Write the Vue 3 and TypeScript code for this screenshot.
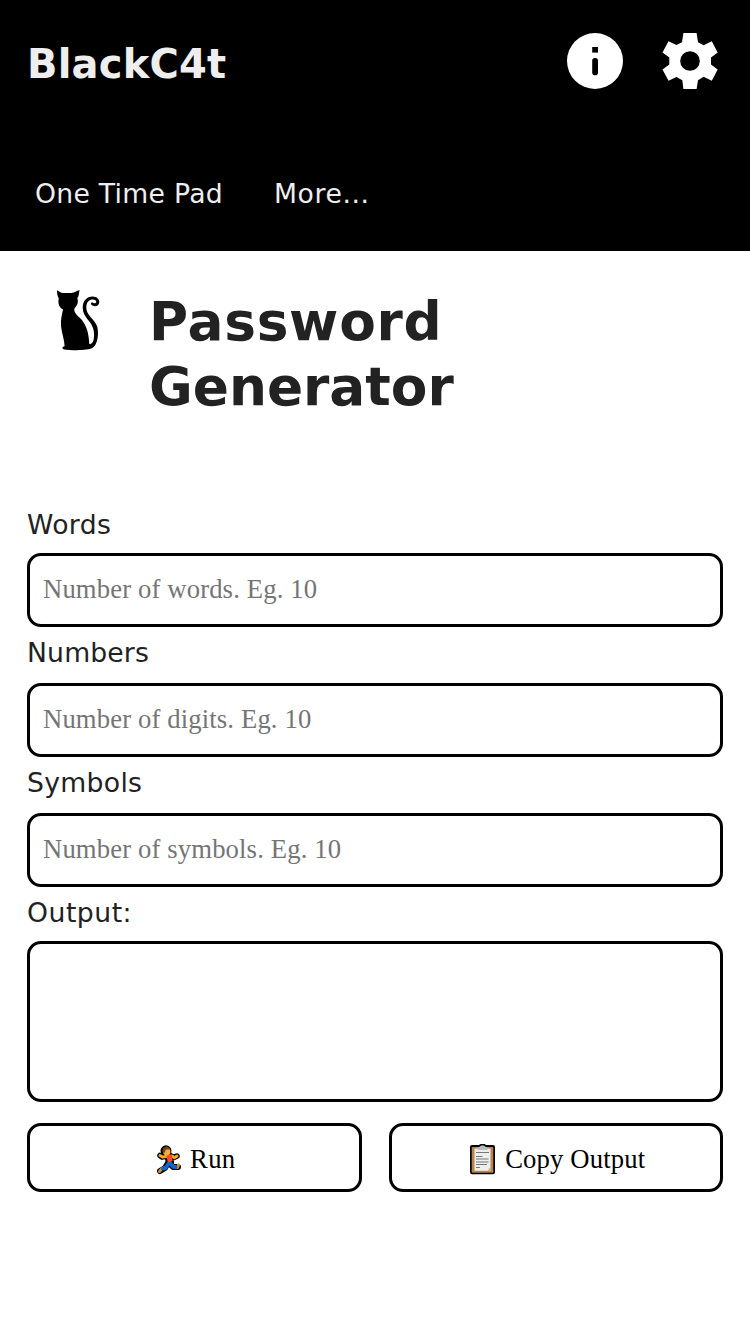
<script setup lang="ts">
interface Field {
  id: string
  label: string
  hint: string
}

const fields: Field[] = [
  { id: 'words', label: 'Words', hint: 'Number of words. Eg. 10' },
  { id: 'numbers', label: 'Numbers', hint: 'Number of digits. Eg. 10' },
  { id: 'symbols', label: 'Symbols', hint: 'Number of symbols. Eg. 10' },
]
</script>

<template>
  <div class="page">
    <header class="header">
      <div class="bar">
        <span class="brand">BlackC4t</span>
        <div class="actions">
          <svg class="icon" viewBox="0 0 56 56" aria-label="Info">
            <circle cx="28" cy="28" r="28" fill="#fff" />
            <rect x="25.2" y="14" width="5.800" height="5.600" />
            <rect x="25.2" y="25" width="5.800" height="17.200" rx="2.800" />
          </svg>
          <svg class="icon" viewBox="0 0 56 56" aria-label="Settings">
            <path fill="#fff" fill-rule="evenodd" d="M21.400 0H34.600L36 9.200 41.600 12.300 49.800 8.200 55.700 19.400 49 24.600V31.400L55.700 36.600 49.800 47.800 41.600 43.700 36 47.300 34.600 56H21.400L20.300 47.300 14.400 43.900 6.500 47.800 .5 36.600 7.300 31.400V24.600L.5 19.400 6.500 8.200 14.400 12 20 9.200ZM28 18.200A9.800 9.800 0 1 0 28 37.800A9.800 9.800 0 1 0 28 18.200Z" />
          </svg>
        </div>
      </div>
      <nav class="nav">
        <a class="pad">One Time Pad</a>
        <a class="more">More...</a>
      </nav>
    </header>

    <main class="main">
      <div class="title">
        <svg class="cat" viewBox="0 0 80 80" aria-hidden="true">
          <path d="M17 10.200C18.800 11.200 21 13 23.300 12.900H31.500C34 12.700 37 11 39.500 10C39 13 39 16 37.300 18.300C38.500 22 37.800 25 34.500 28.300C33.500 31.500 36 34.500 40 38C46 44 48.800 52 49.300 64H50.500C54.500 63 54.700 54 53.300 49C51.500 41 42.700 37 42.700 28C42.700 20.500 47 16.500 52.500 16.500C57 16.500 59.600 19.500 59.300 22.500C59 25.800 55.500 27 52.500 25.600C50.500 24.500 50.600 22.800 52.200 22.300C53.600 23.700 56 23.400 56.300 21.900C56.400 20.400 54.500 19.200 52 19.500C48.500 19.800 46.300 23 46.300 27.500C46.300 36 55 39 57.300 47C59 54 57.500 64.500 53 67.500C48 71 31 70.300 24.200 69.400C21.700 69 22 66.500 24.600 66.200C24.500 60 21.800 53.500 21 46C20.500 40 22 34 23 29.500C19.500 27.500 17.500 24 18.800 18.500C17.300 16 17 13 17 10.200Z" />
        </svg>
        <h1><span class="first">Password</span> Generator</h1>
      </div>

      <form class="form" @submit.prevent>
        <div v-for="f in fields" :key="f.id" class="field">
          <label :for="f.id" :class="f.id">{{ f.label }}</label>
          <input :id="f.id" :placeholder="f.hint" />
        </div>
        <div class="result">
          <label for="output" class="out">Output:</label>
          <textarea id="output" readonly></textarea>
        </div>
        <div class="buttons">
          <button type="submit">
            <svg class="runner" viewBox="0 0 24 30" stroke-linejoin="round" stroke-linecap="round" fill="none">
              <g stroke="#000">
                <path d="M10 11L5 12 3 10.500M14 11L17 12.500 20 11" stroke-width="5.500" />
                <path d="M11 18L8 23 3 26M13 19L16 22 21 22" stroke-width="6" />
                <path d="M11 10L13 17" stroke-width="8" />
              </g>
              <circle cx="9" cy="5.800" r="5.500" fill="#000" />
              <path d="M9 11.500L5.500 12 3 10.500M15 11L17.500 12.700 20 11" stroke="#f2a82c" stroke-width="3" />
              <path d="M5 23.500L2.500 26.500M19 22.500H20.500L21.500 20" stroke="#d99025" stroke-width="3" />
              <path d="M12 18L9 22.500 6 23.500M13 18L16 21.500 18.500 22" stroke="#0869c8" stroke-width="4" />
              <path d="M10.500 11L14 10.500 14.500 15.500 11.500 16Z" fill="#ff4b23" stroke="#ff4b23" stroke-width="2" />
              <circle cx="9.800" cy="6.700" r="3.700" fill="#f5ae35" />
              <path d="M5.500 7C4.500 1 11.500 -.5 13 4.500L9 4.500 7.500 8Z" fill="#74401c" />
            </svg>
            <span class="run">Run</span>
          </button>
          <button type="button">
            <svg class="clip" viewBox="0 0 25 31">
              <path d="M2 1H9L10.500 0H14.500L16 1H23Q25 1 25 3V28Q25 30.300 23 30.300H2Q0 30.300 0 28V3Q0 1 2 1Z" />
              <rect x="1.700" y="3" width="21.600" height="25.800" rx="1" fill="#b9834f" />
              <rect x="4.500" y="4.600" width="16" height="22.200" fill="#eee" />
              <path d="M7.500 6V3.700L10 2.500 11 1.500H14L15 2.500 17.500 3.700V6Z" fill="#bbb" />
              <path d="M6 8.500H19M6 12.500H12.500M6 15H18.500M6 18H18.500M6 20.500H17M6 23.500H10" stroke="#777" stroke-width="1" />
              <path d="M20.500 23L17.500 26.800H20.500Z" fill="#caa684" />
            </svg>
            <span class="copy">Copy Output</span>
          </button>
        </div>
      </form>
    </main>
  </div>
</template>

<style>
body {
  margin: 0;
  background: #fff;
}
</style>

<style scoped>
.page {
  min-height: 1334px;
  box-sizing: border-box;
  color: #222;
  font-family: Verdana, 'DejaVu Sans', sans-serif;
}
.header {
  height: 251px;
  box-sizing: border-box;
  padding: 32px 32px 0 27px;
  background: #000;
  color: #eee;
}
.bar {
  display: flex;
  justify-content: space-between;
  height: 64px;
}
.brand {
  font-weight: 700;
  font-size: 40px;
  line-height: 64px;
  letter-spacing: 0.2px;
}
.actions {
  display: flex;
  gap: 39px;
  padding-top: 1px;
}
.icon {
  width: 56px;
  height: 56px;
}
.nav {
  display: flex;
  gap: 51px;
  padding: 79px 0 0 8px;
  font-size: 26.67px;
  line-height: 37px;
}
.pad {
  letter-spacing: 0.28px;
}
.more {
  letter-spacing: 0.6px;
}
.main {
  padding: 40px 27px 0;
}
.title {
  display: flex;
  height: 211px;
}
.cat {
  flex: none;
  width: 80px;
  height: 80px;
  margin: -11px 29px 0 13px;
}
h1 {
  width: 400px;
  margin: -2px 0 0;
  font-size: 53.33px;
  line-height: 65px;
}
.first {
  letter-spacing: 0.75px;
}
.field,
.result {
  display: flex;
  flex-direction: column;
}
.field {
  height: 130px;
}
label {
  height: 51px;
  font-size: 26.67px;
  line-height: 41px;
}
.words {
  line-height: 45px;
  letter-spacing: 0.35px;
}
.numbers {
  letter-spacing: 0.15px;
}
.symbols {
  letter-spacing: 0.3px;
}
.out {
  letter-spacing: 0.5px;
}
.result label {
  height: 49px;
}
input,
textarea,
button {
  box-sizing: border-box;
  margin: 0;
  border: 3px solid #000;
  border-radius: 14px;
  background: #fff;
  color: #000;
  font: 26.67px 'Liberation Serif', serif;
  outline: none;
}
input {
  height: 74px;
  padding: 0 13px 2px;
  letter-spacing: 0.14px;
}
input::placeholder {
  color: #757575;
}
textarea {
  height: 161px;
  resize: none;
}
.buttons {
  display: grid;
  grid-template-columns: 1fr 1fr;
  gap: 27px;
  margin-top: 21px;
}
button {
  display: flex;
  align-items: center;
  justify-content: center;
  height: 69px;
  padding: 4px 0 0 4px;
}
.run {
  letter-spacing: 0.3px;
}
.copy {
  letter-spacing: 0.15px;
}
.runner {
  width: 24px;
  height: 30px;
  margin-right: 9px;
}
.clip {
  width: 25px;
  height: 31px;
  margin-right: 10px;
}
</style>
